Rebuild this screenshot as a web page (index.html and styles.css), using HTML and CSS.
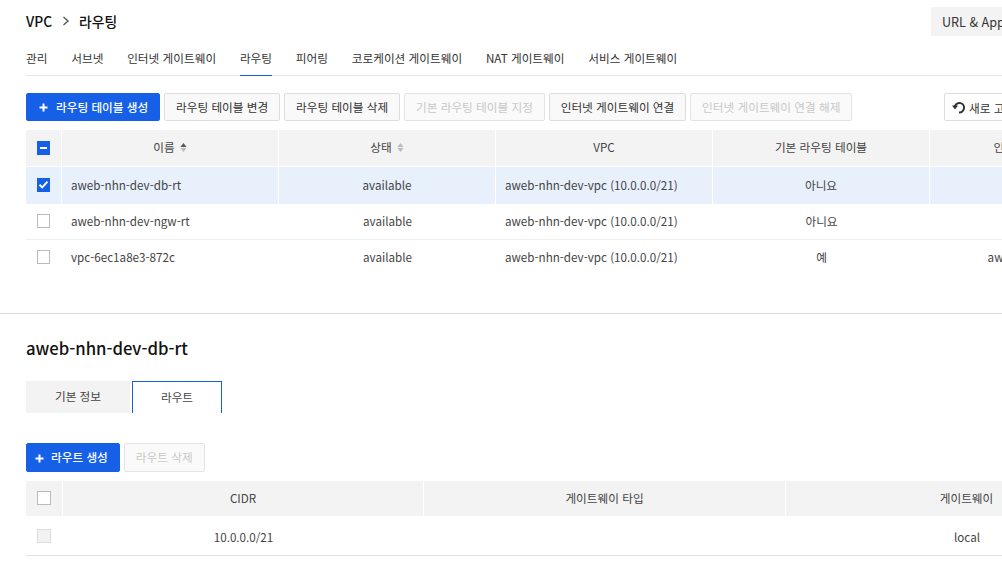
FILE: index.html
```html
<!DOCTYPE html>
<html lang="ko">
<head>
<meta charset="utf-8">
<title>라우팅</title>
<link rel="stylesheet" href="styles.css">
</head>
<body>
<div class="page">
  <header class="topbar">
    <div class="crumbs"><span>VPC</span><svg class="crumb-sep" width="8" height="10" viewBox="0 0 8 10"><path d="M1.5 1 L6 5 L1.5 9" fill="none" stroke="#555" stroke-width="1.4"/></svg><span>라우팅</span></div>
    <div class="url-btn">URL &amp; Appkey</div>
  </header>
  <nav class="tabs">
    <a>관리</a><a>서브넷</a><a>인터넷 게이트웨이</a><a class="active">라우팅</a><a>피어링</a><a>코로케이션 게이트웨이</a><a>NAT 게이트웨이</a><a>서비스 게이트웨이</a>
  </nav>
  <div class="toolbar">
    <button class="btn primary"><svg class="plus" width="9" height="9" viewBox="0 0 9 9"><path d="M4.5 0.5 V8.5 M0.5 4.5 H8.5" stroke="#fff" stroke-width="2"/></svg>라우팅 테이블 생성</button>
    <button class="btn">라우팅 테이블 변경</button>
    <button class="btn">라우팅 테이블 삭제</button>
    <button class="btn off">기본 라우팅 테이블 지정</button>
    <button class="btn">인터넷 게이트웨이 연결</button>
    <button class="btn off">인터넷 게이트웨이 연결 해제</button>
    <button class="btn refresh"><svg width="14" height="14" viewBox="0 0 14 14"><path d="M7 12.4 A4.7 4.7 0 1 0 2.9 6.2" fill="none" stroke="#333" stroke-width="2"/><path d="M0 5.6 L6 5.6 L3 9.4 Z" fill="#333"/></svg>새로 고침</button>
  </div>
  <table class="grid main">
    <thead>
      <tr>
        <th class="c"><span class="box minus"></span></th>
        <th class="w216">이름<svg class="sort" width="7" height="11" viewBox="0 0 7 11"><path d="M3.5 1 L6.5 5 H0.5 Z" fill="#555"/><path d="M3.5 10 L6.5 6 H0.5 Z" fill="#bbb"/></svg></th>
        <th class="w216">상태<svg class="sort" width="7" height="11" viewBox="0 0 7 11"><path d="M3.5 1 L6.5 5 H0.5 Z" fill="#bbb"/><path d="M3.5 10 L6.5 6 H0.5 Z" fill="#bbb"/></svg></th>
        <th class="w216">VPC</th>
        <th class="w216">기본 라우팅 테이블</th>
        <th class="w216">인터넷 게이트웨이</th>
      </tr>
    </thead>
    <tbody>
      <tr class="sel">
        <td class="c"><span class="box checked"><svg width="13" height="13" viewBox="0 0 13 13"><path d="M2.5 6.8 L5.2 9.4 L10.5 3.6" fill="none" stroke="#fff" stroke-width="2"/></svg></span></td>
        <td class="l">aweb-nhn-dev-db-rt</td><td>available</td><td class="l">aweb-nhn-dev-vpc (10.0.0.0/21)</td><td>아니요</td><td></td>
      </tr>
      <tr>
        <td class="c"><span class="box"></span></td>
        <td class="l">aweb-nhn-dev-ngw-rt</td><td>available</td><td class="l">aweb-nhn-dev-vpc (10.0.0.0/21)</td><td>아니요</td><td></td>
      </tr>
      <tr class="plain">
        <td class="c"><span class="box"></span></td>
        <td class="l">vpc-6ec1a8e3-872c</td><td>available</td><td class="l">aweb-nhn-dev-vpc (10.0.0.0/21)</td><td>예</td><td>aweb-nhn-dev-igw</td>
      </tr>
    </tbody>
  </table>
  <hr class="divider">
  <h2 class="title">aweb-nhn-dev-db-rt</h2>
  <div class="subtabs"><a>기본 정보</a><a class="active">라우트</a></div>
  <div class="toolbar second">
    <button class="btn primary"><svg class="plus" width="9" height="9" viewBox="0 0 9 9"><path d="M4.5 0.5 V8.5 M0.5 4.5 H8.5" stroke="#fff" stroke-width="2"/></svg>라우트 생성</button>
    <button class="btn off">라우트 삭제</button>
  </div>
  <table class="grid routes">
    <thead>
      <tr>
        <th class="c2"><span class="box big"></span></th>
        <th class="w361">CIDR</th>
        <th class="w362">게이트웨이 타입</th>
        <th class="w362">게이트웨이</th>
      </tr>
    </thead>
    <tbody>
      <tr class="last">
        <td class="c2"><span class="box big dis"></span></td>
        <td>10.0.0.0/21</td><td></td><td>local</td>
      </tr>
    </tbody>
  </table>
</div>
</body>
</html>
```
FILE: styles.css
```css
* { box-sizing: border-box; }
html, body { margin: 0; height: 570px; overflow: hidden; background: #fff; }
body { font-family: "Noto Sans CJK KR", "Noto Sans", sans-serif; font-size: 11.65px; color: #333; }
.page { width: 1400px; padding-left: 26px; }
.topbar { display: flex; align-items: center; height: 29px; margin-top: 7px; width: 976px; position: relative; }
.crumbs { display: flex; align-items: center; font-size: 13.8px; font-weight: 500; color: #111; height: 29px; margin-top: -1px; }
.crumb-sep { margin: 0 9px 0 10px; }
.url-btn { position: absolute; left: 905px; top: 0; width: 120px; height: 29px; background: #f3f3f3; border-radius: 2px; padding-left: 11px; line-height: 29px; font-size: 12.6px; color: #333; white-space: nowrap; }
.tabs { display: flex; gap: 23.8px; width: 1400px; height: 34px; margin-top: 6px; border-bottom: 1px solid #e6e6e6; }
.tabs a { height: 34px; line-height: 31px; color: #333; white-space: nowrap; }
.tabs a.active { border-bottom: 1px solid #1a5fe0; }
.toolbar { display: flex; gap: 3.8px; margin-top: 17px; height: 28px; position: relative; }
.btn { font: inherit; height: 28px; padding: 0 11px 2px; border: 1px solid #ddd; background: #f9f9f9; color: #333; border-radius: 2px; white-space: nowrap; }
.btn.primary { background: #1560e6; border-color: #1560e6; color: #fff; font-weight: 500; padding: 0 11px 2px 12px; }
.btn .plus { margin-right: 8px; vertical-align: -0.5px; }
.btn.off { color: #c8c8c8; background: #fafafa; border-color: #e3e3e3; }
.btn.refresh { position: absolute; left: 918px; width: 100px; background: #fff; padding: 0 7px; display: flex; align-items: center; gap: 3px; }
.grid { border-collapse: separate; border-spacing: 0; table-layout: fixed; margin-top: 9px; }
.main { width: 1121px; }
.grid th { height: 37px; background: #f3f3f3; font-weight: 400; border-right: 1px solid #fff; border-bottom: 1px solid #fff; padding: 0 0 3px; color: #444; text-align: center; }
.grid td { height: 36px; text-align: center; padding: 0 0 2px; color: #444; border-bottom: 1px solid #f0f0f0; }
.grid td.l { text-align: left; padding-left: 9px; }
.grid .c, .grid .c2 { padding: 0 0 4px; }
.c { width: 36px; }
.w216 { width: 217px; }
.main tr.sel td { background: #e8f0fc; border-right: 1px solid #fff; border-bottom: 0; height: 37px; }
.main tr.plain td { border-bottom: 0; padding-bottom: 3px; }
.main tr.plain td.c { padding-bottom: 5px; }
.sort { margin-left: 5px; vertical-align: -1px; }
.box { display: inline-block; width: 13px; height: 14px; border: 1px solid #bbb; background: #fff; vertical-align: middle; position: relative; margin-right: 1px; }
.box.minus { background: #1560e6; border-color: #1560e6; }
.box.minus::after { content: ""; position: absolute; left: 2px; right: 2px; top: 5px; height: 2px; background: #fff; }
.box.checked { background: #1560e6; border-color: #1560e6; }
.box.checked svg { position: absolute; left: -1px; top: -1px; }
.divider { border: 0; border-top: 1px solid #ddd; margin: 37px 0 0 -26px; width: 1400px; }
.title { font-size: 16.7px; font-weight: 500; color: #111; margin: 20px 0 0; line-height: 28px; height: 28px; }
.subtabs { display: flex; margin-top: 19px; gap: 2px; }
.subtabs a { height: 32px; line-height: 30px; text-align: center; background: #f3f3f3; color: #444; width: 104px; }
.subtabs a.active { width: 90px; background: #fff; border: 1px solid #1a5fe0; border-bottom: 0; }
.toolbar.second { margin-top: 30px; height: 29px; gap: 4px; }
.second .btn { height: 29px; }
.second .btn.primary { padding: 0 11px 2px 8px; }
.second .btn .plus { margin-right: 7px; }
.routes { margin-top: 9px; width: 1122px; }
.routes th { height: 35px; border-bottom: 0; }
.routes th.c2 { padding-bottom: 4px; }
.routes td { height: 40px; padding-top: 2px; padding-bottom: 0; border-bottom: 1px solid #e0e0e0; }
.routes td.c2 { padding-bottom: 2px; padding-top: 0; }
.c2 { width: 37px; }
.w361 { width: 361px; }
.w362 { width: 362px; }
.box.big { width: 14px; height: 14px; }
.box.dis { background: #f2f2f2; border-color: #ddd; }
```
